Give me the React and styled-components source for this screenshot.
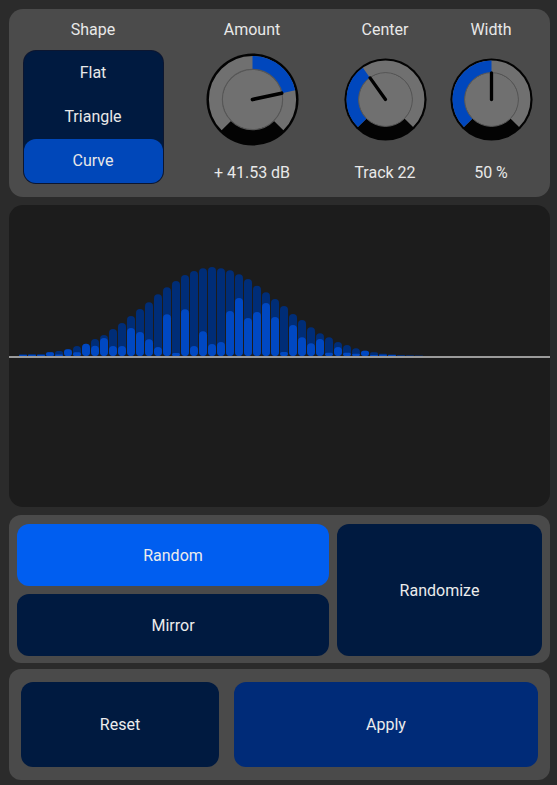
import React from 'react';
import styled, { createGlobalStyle } from 'styled-components';

const GlobalStyle = createGlobalStyle`
  html, body {
    margin: 0;
    background: #2b2b2b;
  }
  body {
    font-family: Roboto, "Liberation Sans", sans-serif;
    color: #e8e8e8;
  }
`;

const Shell = styled.div`
  display: flex;
  flex-direction: column;
  gap: 8px;
  padding: 9px 7px 5px 9px;
  width: 541px;
`;

const TopPanel = styled.div`
  display: flex;
  height: 188px;
  box-sizing: border-box;
  padding: 11px 0 0 14px;
  background: #4b4b4b;
  border-radius: 14px;
`;

const Column = styled.div`
  display: flex;
  flex-direction: column;
  align-items: center;
  width: ${p => p.$w}px;
  margin-left: ${p => p.$ml || 0}px;
`;

const Label = styled.div`
  height: 20px;
  line-height: 20px;
  font-size: 16px;
  white-space: nowrap;
`;

const Segmented = styled.div`
  display: flex;
  flex-direction: column;
  width: 139px;
  margin-top: 11px;
  background: #001a40;
  border-radius: 12px;
  box-shadow: 0 0 0 1px #0c1630;
`;

const Segment = styled.div`
  height: 44px;
  line-height: 44px;
  text-align: center;
  font-size: 16px;
  border-radius: 12px;
  background: ${p => (p.$active ? '#0047b9' : 'transparent')};
`;

const KnobWrap = styled.div`
  height: 118px;
  display: flex;
  align-items: center;
  justify-content: center;
`;

const Value = styled(Label)`
  margin-top: 5px;
`;

const GraphPanel = styled.div`
  height: 302px;
  background: #1c1c1c;
  border-radius: 14px;
  overflow: hidden;
  svg {
    display: block;
  }
`;

const ActionPanel = styled.div`
  display: grid;
  grid-template-columns: 312fr 205fr;
  grid-template-rows: 62px 62px;
  gap: 8px;
  padding: 9px 8px 7px 8px;
  background: #4a4a4a;
  border-radius: 12px;
`;

const FooterPanel = styled.div`
  display: grid;
  grid-template-columns: 198fr 304fr;
  gap: 15px;
  height: 111px;
  box-sizing: border-box;
  margin-top: -2px;
  padding: 13px 12px;
  background: #4a4a4a;
  border-radius: 12px;
`;

const Button = styled.button`
  display: flex;
  align-items: center;
  justify-content: center;
  border: none;
  border-radius: 12px;
  font-family: inherit;
  font-size: 16px;
  color: #ececec;
  background: ${p => p.$bg || '#001a40'};
  grid-row: ${p => (p.$tall ? '1 / span 2' : 'auto')};
  grid-column: ${p => (p.$tall ? '2' : 'auto')};
`;

// knob angles in degrees, 0 = up, clockwise
const pt = (r, a) => {
  const t = (a * Math.PI) / 180;
  return [50 + r * Math.sin(t), 50 - r * Math.cos(t)];
};

const arc = (r, a0, a1) => {
  const [x0, y0] = pt(r, a0);
  const [x1, y1] = pt(r, a1);
  const large = a1 - a0 > 180 ? 1 : 0;
  return `M ${x0} ${y0} A ${r} ${r} 0 ${large} 1 ${x1} ${y1}`;
};

const Knob = ({ size, from, to, pointer }) => {
  const [px, py] = pt(32, pointer);
  return (
    <svg width={size} height={size} viewBox="0 0 100 100">
      <circle cx="50" cy="50" r="49.5" fill="#030303" />
      <path d={arc(39.6, -135, 135)} stroke="#707070" strokeWidth="14.6" fill="none" />
      <path d={arc(39.6, from, to)} stroke="#0047bd" strokeWidth="14.6" fill="none" />
      <circle cx="50" cy="50" r="32.4" fill="#707070" stroke="#575757" strokeWidth="1.2" />
      <line x1="50" y1="50" x2={px} y2={py} stroke="#000" strokeWidth="4" strokeLinecap="round" />
    </svg>
  );
};

const dark = [
  1.7, 2, 2, 3.7, 5, 6.7, 10, 12.3, 17, 21, 27, 33, 40, 47, 53.7, 61.7, 68.7, 75, 81, 85,
  87.7, 89, 87.7, 85.7, 81.7, 77, 70.3, 63.7, 57, 50, 42, 36, 28.7, 22.7, 18.7, 14, 11,
  7.7, 5.3, 3.7, 2.3, 1.5, 1, 0.8, 0.6,
];
const bright = [
  1, 1, 1, 3.7, 1.5, 6.7, 3.7, 12.3, 10.3, 18, 10, 10, 28, 24, 16.7, 9, 41.7, 3, 46.7, 10,
  24.7, 12, 14, 45, 58, 38, 44, 53, 39, 4, 31, 18.7, 12.7, 17, 3.3, 9, 3.3, 2.3, 5.3, 1, 1.3, 1,
];
const TRACKS = 58;
const BASE = 151;

const Chart = () => (
  <svg width="541" height="302" viewBox="0 0 541 302">
    {Array.from({ length: TRACKS }, (_, i) => {
      const x = 10 + i * 9;
      const d = dark[i] || 0;
      const b = bright[i] || 0;
      return (
        <g key={i}>
          {d > 0 && <rect x={x} y={BASE - d} width="8" height={d} rx={Math.min(4, d / 2)} fill="#002d77" />}
          {b > 0 && <rect x={x} y={BASE - b} width="8" height={b} rx={Math.min(4, b / 2)} fill="#0048c2" />}
        </g>
      );
    })}
    <rect x="0" y={BASE} width="541" height="2" fill="#9a9a9a" />
  </svg>
);

export default function App() {
  const amountAngle = (135 * 41.53) / 72;
  const centerAngle = -135 + (21 / 57) * 270;
  return (
    <>
      <GlobalStyle />
      <Shell>
        <TopPanel>
          <Column $w={140}>
            <Label>Shape</Label>
            <Segmented>
              <Segment>Flat</Segment>
              <Segment>Triangle</Segment>
              <Segment $active>Curve</Segment>
            </Segmented>
          </Column>
          <Column $w={100} $ml={39}>
            <Label>Amount</Label>
            <KnobWrap>
              <Knob size={93} from={0} to={amountAngle} pointer={amountAngle} />
            </KnobWrap>
            <Value>+ 41.53 dB</Value>
          </Column>
          <Column $w={90} $ml={38}>
            <Label>Center</Label>
            <KnobWrap>
              <Knob size={83} from={-135} to={centerAngle} pointer={centerAngle} />
            </KnobWrap>
            <Value>Track 22</Value>
          </Column>
          <Column $w={90} $ml={16}>
            <Label>Width</Label>
            <KnobWrap>
              <Knob size={83} from={-135} to={0} pointer={0} />
            </KnobWrap>
            <Value>50 %</Value>
          </Column>
        </TopPanel>
        <GraphPanel>
          <Chart />
        </GraphPanel>
        <ActionPanel>
          <Button $bg="#005ef0">Random</Button>
          <Button $tall>Randomize</Button>
          <Button>Mirror</Button>
        </ActionPanel>
        <FooterPanel>
          <Button>Reset</Button>
          <Button $bg="#002b78">Apply</Button>
        </FooterPanel>
      </Shell>
    </>
  );
}
